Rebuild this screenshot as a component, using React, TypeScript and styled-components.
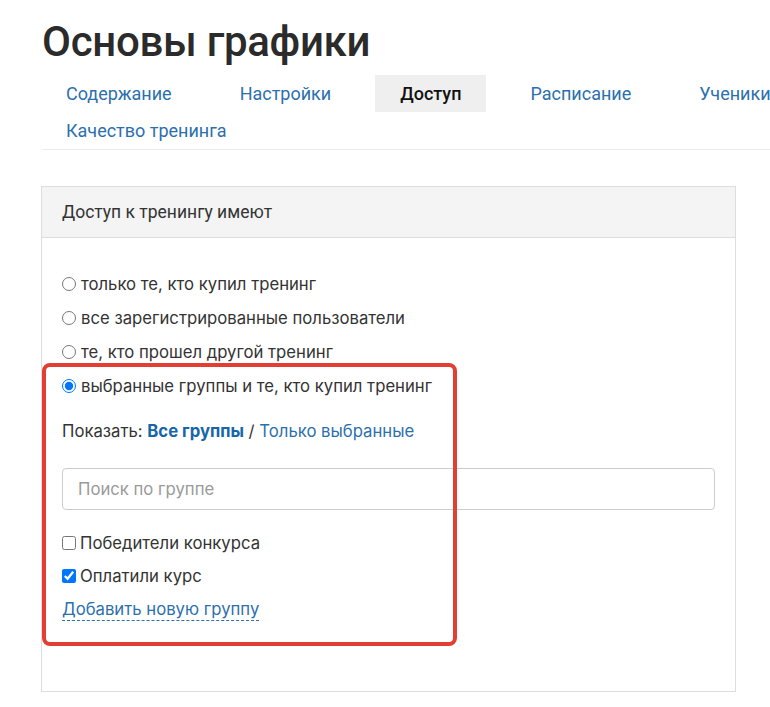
import React from "react";
import styled, { createGlobalStyle } from "styled-components";

const Global = createGlobalStyle`
  html, body { margin: 0; padding: 0; background: #fff; }
  body { font-family: Inter, "Noto Sans", sans-serif; color: #333; }
  * { box-sizing: border-box; }
`;

const Page = styled.div`
  padding-left: 42px;
  overflow: hidden;
`;

const Title = styled.h1`
  margin: 18px 0 9px;
  font-family: Roboto, "Liberation Sans", sans-serif;
  font-weight: 500;
  font-size: 42px;
  line-height: 48px;
  color: #2b2b2b;
  letter-spacing: -0.3px;
`;

const Tabs = styled.nav`
  display: flex;
  flex-wrap: wrap;
  width: 820px;
  column-gap: 20px;
  border-bottom: 1px solid #ececec;
`;

const Tab = styled.a<{ $active?: boolean }>`
  display: block;
  height: 37px;
  line-height: 37px;
  padding: 0 ${(p) => (p.$active ? "25px" : "24px")};
  font-family: Roboto, "Liberation Sans", sans-serif;
  font-size: 18px;
  font-weight: ${(p) => (p.$active ? 500 : 400)};
  color: ${(p) => (p.$active ? "#111" : "#2c6fae")};
  background: ${(p) => (p.$active ? "#efefef" : "transparent")};
  text-decoration: none;
  white-space: nowrap;
`;

const Panel = styled.section`
  position: relative;
  margin: 36px 0 0 -1px;
  width: 695px;
  border: 1px solid #dddddd;
`;

const PanelHead = styled.div`
  height: 51px;
  line-height: 51px;
  padding-left: 20px;
  background: #f4f4f4;
  border-bottom: 1px solid #dddddd;
  font-family: Roboto, "Liberation Sans", sans-serif;
  font-size: 17.5px;
  color: #333;
`;

const PanelBody = styled.div`
  padding: 29px 20px 70px 20px;
  display: flex;
  flex-direction: column;
  font-size: 16.7px;
`;

const Choice = styled.label`
  display: flex;
  align-items: center;
  height: 34px;
  color: #333;
  gap: 5px;
`;

const Radio = styled.input.attrs({ type: "radio", name: "access" })`
  width: 14px;
  height: 14px;
  margin: 0;
`;

const Check = styled.input.attrs({ type: "checkbox" })`
  width: 14px;
  height: 14px;
  margin: 0;
`;

const ShowRow = styled.div`
  margin-top: 11px;
  height: 34px;
  line-height: 34px;
  color: #333;
`;

const LinkBold = styled.a`
  color: #1766aa;
  font-weight: 700;
  text-decoration: none;
`;

const Link = styled.a`
  color: #2c6fae;
  text-decoration: none;
`;

const Search = styled.input`
  margin-top: 20px;
  width: 653px;
  height: 42px;
  border: 1px solid #cccccc;
  border-radius: 4px;
  padding: 0 15px;
  font-family: Inter, "Noto Sans", sans-serif;
  font-size: 16.7px;
  color: #333;
  &::placeholder { color: #9a9a9a; }
`;

const CheckList = styled.div`
  margin-top: 16px;
  display: flex;
  flex-direction: column;
`;

const CheckRow = styled(Choice)`
  height: 33px;
  gap: 4px;
`;

const AddLink = styled.a`
  align-self: flex-start;
  margin-top: 6px;
  line-height: 22px;
  color: #2c6fae;
  text-decoration: none;
  border-bottom: 1px dashed #2c6fae;
`;

const Highlight = styled.div`
  position: absolute;
  left: 0px;
  top: 176px;
  width: 415px;
  height: 283px;
  border: 4px solid #e23e31;
  border-radius: 8px;
  pointer-events: none;
`;

export default function App() {
  return (
    <>
      <Global />
      <Page>
        <Title>Основы графики</Title>
        <Tabs>
          <Tab href="#">Содержание</Tab>
          <Tab href="#">Настройки</Tab>
          <Tab href="#" $active>Доступ</Tab>
          <Tab href="#">Расписание</Tab>
          <Tab href="#">Ученики</Tab>
          <Tab href="#">Качество тренинга</Tab>
        </Tabs>
        <Panel>
          <PanelHead>Доступ к тренингу имеют</PanelHead>
          <PanelBody>
            <Choice><Radio />только те, кто купил тренинг</Choice>
            <Choice><Radio />все зарегистрированные пользователи</Choice>
            <Choice><Radio />те, кто прошел другой тренинг</Choice>
            <Choice><Radio defaultChecked />выбранные группы и те, кто купил тренинг</Choice>
            <ShowRow>
              Показать: <LinkBold href="#">Все группы</LinkBold> / <Link href="#">Только выбранные</Link>
            </ShowRow>
            <Search placeholder="Поиск по группе" />
            <CheckList>
              <CheckRow><Check />Победители конкурса</CheckRow>
              <CheckRow><Check defaultChecked />Оплатили курс</CheckRow>
            </CheckList>
            <AddLink href="#">Добавить новую группу</AddLink>
          </PanelBody>
          <Highlight />
        </Panel>
      </Page>
    </>
  );
}
